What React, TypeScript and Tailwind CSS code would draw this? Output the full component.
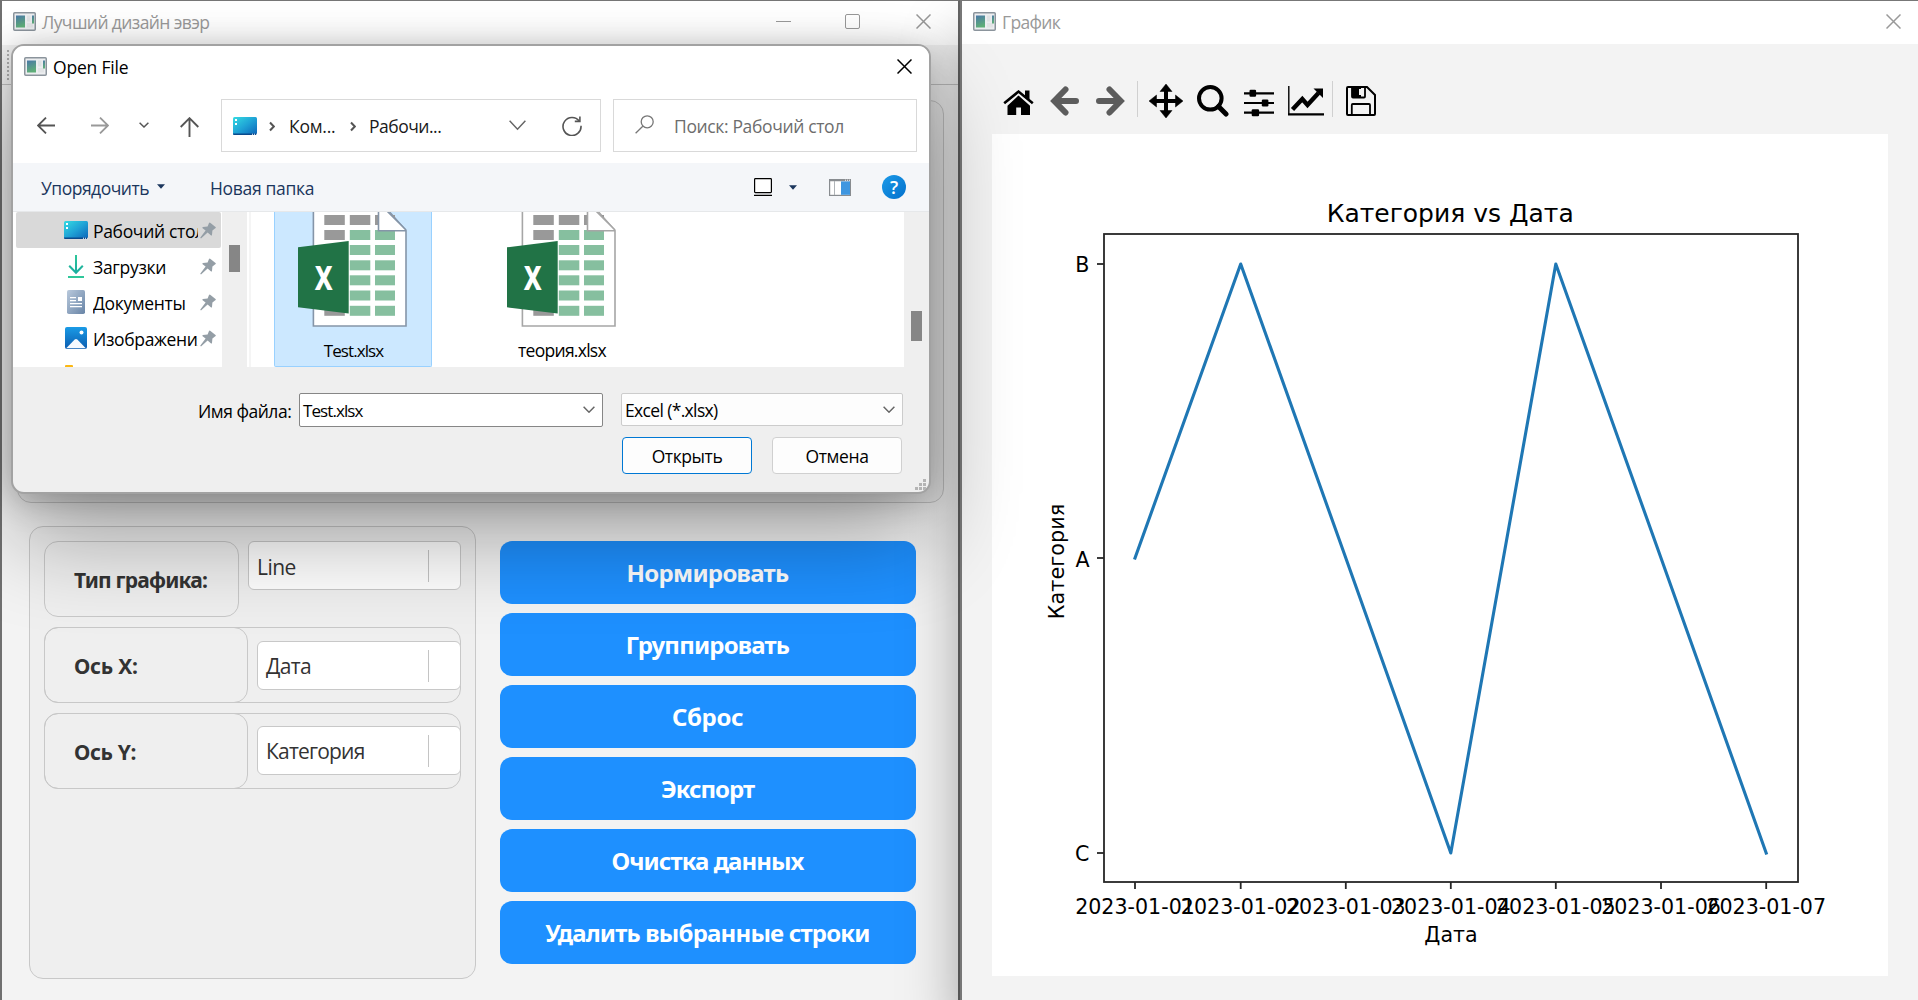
import React from 'react';

const ui = "font-['Open_Sans',sans-serif] text-[17.5px] leading-none whitespace-nowrap";

function AppIcon() {
  return (
    <svg className="block shrink-0" width="23" height="19" viewBox="0 0 23 19">
      <defs>
        <linearGradient id="appg" x1="0" y1="0" x2="0.3" y2="1">
          <stop offset="0" stopColor="#4a78a8" />
          <stop offset="1" stopColor="#5fae78" />
        </linearGradient>
      </defs>
      <rect x="0.75" y="0.75" width="21.5" height="17.5" rx="1" fill="#eceef0" stroke="#8b949c" strokeWidth="1.5" />
      <rect x="3" y="3.5" width="9" height="12" fill="url(#appg)" />
      <rect x="14" y="3.5" width="3.5" height="6" fill="#dfe2e4" />
      <rect x="14" y="11" width="6" height="4.5" fill="#e2e4e6" />
      <rect x="19" y="3.5" width="2" height="8" fill="url(#appg)" />
    </svg>
  );
}

function Cross({ color }: { color: string }) {
  return (
    <svg className="block shrink-0" width="15" height="15" viewBox="0 0 15 15">
      <path d="M0.5 0.5 L14.5 14.5 M14.5 0.5 L0.5 14.5" stroke={color} strokeWidth="1.5" fill="none" />
    </svg>
  );
}

function DesktopIcon() {
  return (
    <svg className="block shrink-0" width="24" height="18" viewBox="0 0 24 18">
      <defs>
        <linearGradient id="deskg" x1="0" y1="0" x2="1" y2="1">
          <stop offset="0" stopColor="#35dbe2" />
          <stop offset="0.5" stopColor="#1fa3d6" />
          <stop offset="1" stopColor="#0b63b8" />
        </linearGradient>
      </defs>
      <rect width="24" height="18" rx="1.5" fill="url(#deskg)" />
      <path d="M0 16.5 H24 V17 Q24 18 22.5 18 H1.5 Q0 18 0 17 Z" fill="#0a4a8c" />
      <path d="M2 2h2v2h-2z M2 6h2v2h-2z" fill="#fff" />
      <path d="M19 16.8h1v1h-1z M21 16.8h1v1h-1z M23 16.8h1v1h-1z" fill="#fff" />
    </svg>
  );
}

function Pin() {
  return (
    <svg className="block shrink-0" width="16" height="17" viewBox="0 0 16 17">
      <path
        d="M9 1 Q9.7 0.2 10.5 0.9 L15.5 5 Q16.2 5.8 15.3 6.3 L12.4 8.4 L12 12.9 Q11.7 14 10.8 13.3 L7.6 10.4 L1 16.4 L0.2 15.8 L5.6 8.6 L2.6 6.2 Q2 5.3 3 5 L7.6 4.4 Z"
        fill="#949ea6"
      />
    </svg>
  );
}

function ChevronDown({ w, color = '#666' }: { w: number; color?: string }) {
  return (
    <svg className="block shrink-0" width={w} height={w * 0.6} viewBox={`0 0 ${w} ${w * 0.6}`}>
      <path d={`M0.6 0.8 L${w / 2} ${w * 0.6 - 1} L${w - 0.6} 0.8`} stroke={color} strokeWidth="1.5" fill="none" />
    </svg>
  );
}

function Crumb() {
  return (
    <svg className="block shrink-0" width="6" height="11" viewBox="0 0 6 11">
      <path d="M1 1.5 L4.8 5.5 L1 9.5" stroke="#555" strokeWidth="2" fill="none" />
    </svg>
  );
}

function Caret() {
  return (
    <svg className="block shrink-0" width="8" height="5" viewBox="0 0 8 5">
      <path d="M0 0.3 H8 L4 4.7 Z" fill="#1b365d" />
    </svg>
  );
}

function SheetIcon({ outline }: { outline: string }) {
  const rows = [3, 18, 33, 48.3, 63.3, 78.5, 93.8];
  return (
    <svg className="block shrink-0" width="110" height="116" viewBox="0 0 110 116">
      <path d="M15.4 -4 H88 L108 18.5 V114 H15.4 Z" fill="#fff" stroke={outline} strokeWidth="1.6" />
      {rows.map((y, i) => (
        <g key={y}>
          <rect x="26.3" y={y} width="20.5" height="10" fill="#999" />
          <rect x="51.8" y={y} width="20.5" height="10" fill={i === 0 ? '#999' : '#86bf9f'} />
          <rect x="77" y={y} width="20" height="10" fill={i === 0 ? '#999' : '#86bf9f'} />
        </g>
      ))}
      <path d="M80.5 -6 V18.8 H108 L85 -6 Z" fill="#fff" />
      <path d="M80.5 -2 V18.8 H108" fill="none" stroke={outline} strokeWidth="1.6" />
      <path d="M87 -3 L108 18" fill="none" stroke={outline} strokeWidth="1.6" />
      <path d="M0 35.3 L50.7 29 V101.5 L0 95.3 Z" fill="#217346" />
      <text
        x="0"
        y="0"
        transform="translate(25.7 77.5) scale(0.76 1)"
        textAnchor="middle"
        fontFamily="Noto Sans, sans-serif"
        fontWeight="800"
        fontSize="34"
        fill="#fff"
      >
        X
      </text>
    </svg>
  );
}

function FieldRow({ label, value, track, valueTrack, comboTop }: { label: string; value: string; track: string; valueTrack: string; comboTop: string }) {
  return (
    <div className="flex h-[76px] w-[417px] rounded-[14px] border border-[#c8c8c8] bg-[#efefef]">
      <div className="-my-px -ml-px flex w-[204px] shrink-0 items-center rounded-[14px] border border-[#c8c8c8] pt-[2px] pl-[29px]">
        <span className={`font-['Noto_Sans',sans-serif] text-[21px] leading-none font-bold whitespace-nowrap text-[#333] ${track}`}>{label}</span>
      </div>
      <div className={`${comboTop} -mr-px ml-[9px] flex h-[49px] flex-1 items-center rounded-[6px] border border-[#c8c8c8] bg-white`}>
        <span className={`pt-[2px] pl-[8px] font-['Open_Sans',sans-serif] text-[21px] leading-none whitespace-nowrap text-[#333] ${valueTrack}`}>{value}</span>
        <span className="mr-[31px] ml-auto h-8 w-px bg-[#c4c4c4]" />
      </div>
    </div>
  );
}

const actions = [
  { t: 'Нормировать', c: 'tracking-[-0.7px]' },
  { t: 'Группировать', c: 'tracking-[-0.82px]' },
  { t: 'Сброс', c: 'tracking-[-0.4px]' },
  { t: 'Экспорт', c: 'tracking-[-1.02px]' },
  { t: 'Очистка данных', c: 'tracking-[-0.94px]' },
  { t: 'Удалить выбранные строки', c: 'tracking-[-0.81px]' },
];

function MainWindow() {
  return (
    <section className="flex h-full w-[960px] shrink-0 flex-col border-t border-r-2 border-l-2 border-t-[#777] border-r-[#666] border-l-[#707070] bg-[#f3f3f3]">
      <header className="flex h-11 shrink-0 bg-white">
        <div className="flex h-[41px] w-full items-center">
          <div className="-mt-[1px] ml-[11px]"><AppIcon /></div>
          <span className={`${ui} ml-[6px] pt-[2px] tracking-[-0.6px] text-[#999]`}>Лучший дизайн эвэр</span>
          <div className="mr-[27px] ml-auto flex items-center">
            <span className="mr-[54px] h-px w-[15px] bg-[#999]" />
            <span className="mr-[56px] size-[15px] rounded-[2px] border-[1.5px] border-[#999]" />
            <Cross color="#999" />
          </div>
        </div>
      </header>
      <div className="flex h-10 shrink-0 items-center border-b border-[#c2c2c2] pl-[5px]">
        <span className="h-[30px] w-0 border-l-2 border-dotted border-[#b0b0b0]" />
      </div>
      <div className="mt-[15px] ml-[15px] h-[403px] w-[927px] shrink-0 rounded-[14px] border border-[#c8c8c8] bg-[#efefef]" />
      <div className="mt-[23px] ml-[27px] flex gap-6">
        <div className="flex h-[453px] w-[447px] flex-col gap-[10px] rounded-[14px] border border-[#c8c8c8] bg-[#efefef] px-[14px] pt-[14px]">
          <div className="flex h-[76px] gap-[9px]">
            <div className="flex w-[195px] items-center rounded-[14px] border border-[#c8c8c8] pt-[2px] pl-[29px]">
              <span className="font-['Noto_Sans',sans-serif] text-[21px] leading-none font-bold tracking-[-0.8px] whitespace-nowrap text-[#333]">Тип графика:</span>
            </div>
            <div className="flex h-[49px] w-[213px] items-center rounded-[6px] border border-[#c8c8c8] bg-white">
              <span className="pt-[3px] pl-[8px] font-['Open_Sans',sans-serif] text-[21px] leading-none tracking-[-0.55px] text-[#333]">Line</span>
              <span className="mr-[31px] ml-auto h-8 w-px bg-[#c4c4c4]" />
            </div>
          </div>
          <FieldRow label="Ось X:" value="Дата" track="tracking-[-0.25px]" valueTrack="tracking-[-0.64px]" comboTop="mt-[13px]" />
          <FieldRow label="Ось Y:" value="Категория" track="tracking-[-0.35px]" valueTrack="tracking-[-0.8px]" comboTop="mt-[12px]" />
        </div>
        <div className="mt-[15px] flex w-[416px] flex-col gap-[9.5px]">
          {actions.map((a) => (
            <button key={a.t} className={`flex h-[62.5px] items-center justify-center rounded-[12px] bg-[#1e90ff] pt-[2px] pr-[1px] font-['Noto_Sans',sans-serif] text-[24px] leading-none font-bold whitespace-nowrap text-white ${a.c}`}>
              {a.t}
            </button>
          ))}
        </div>
      </div>
    </section>
  );
}

function Home() {
  return (
    <svg className="block shrink-0" width="31" height="26" viewBox="0 0 31 26">
      <path d="M15.5 5.5 L27 15.8 V25 H18 V17.5 H13.2 V25 H4.5 V15.8 Z" fill="#000" />
      <path d="M1.2 13.2 L15.5 1.6 L29.8 13.2" stroke="#000" strokeWidth="2.6" fill="none" />
      <path d="M22 0.5 H26.5 V10 L22 6.5 Z" fill="#000" />
      <path d="M3 14.6 L15.5 4.6 L28 14.6" stroke="#f2f2f2" strokeWidth="1" fill="none" />
    </svg>
  );
}

function BackArrow({ flip = false }: { flip?: boolean }) {
  return (
    <svg className={flip ? 'block shrink-0 -scale-x-100' : 'block shrink-0'} width="29" height="30" viewBox="0 0 29 30">
      <path d="M26 15 H6 M15.5 3.5 L4.3 15 L15.5 26.5" stroke="#5c5c5c" strokeWidth="6" strokeLinecap="round" strokeLinejoin="miter" fill="none" />
    </svg>
  );
}

function Toolbar() {
  return (
    <div className="flex h-[90px] shrink-0 items-center pt-[24px] pl-[41px]">
      <div className="mt-[4px]"><Home /></div>
      <div className="ml-4"><BackArrow /></div>
      <div className="ml-[17px]"><BackArrow flip /></div>
      <span className="-mt-1 ml-[12px] h-9 w-px bg-[#d0d0d0]" />
      <svg className="ml-[11px] block shrink-0" width="34" height="34" viewBox="0 0 34 34">
        <path d="M17 4 V30 M4 17 H30" stroke="#000" strokeWidth="4" />
        <path d="M17 0 L23 7.5 H11 Z M17 34 L23 26.5 H11 Z M0 17 L7.5 11 V23 Z M34 17 L26.5 11 V23 Z" fill="#000" stroke="#000" strokeWidth="0.5" />
      </svg>
      <svg className="ml-[14px] block shrink-0" width="32" height="32" viewBox="0 0 32 32">
        <circle cx="13.3" cy="13.3" r="11.3" stroke="#000" strokeWidth="4" fill="none" />
        <path d="M21.5 21.5 L29 29" stroke="#000" strokeWidth="5" strokeLinecap="round" />
      </svg>
      <svg className="mt-[3px] ml-[15px] block shrink-0" width="30" height="28" viewBox="0 0 30 28">
        <path d="M0 4.3 H30 M0 14 H30 M0 23.7 H30" stroke="#000" strokeWidth="2.2" />
        <rect x="5.5" y="0.8" width="6.6" height="7" rx="1.2" />
        <rect x="17.8" y="10.5" width="6.6" height="7" rx="1.2" />
        <rect x="7.7" y="20.2" width="7.4" height="7" rx="1.2" />
      </svg>
      <svg className="ml-[14px] block shrink-0" width="36" height="30" viewBox="0 0 36 30">
        <path d="M0.8 0 V28.5" stroke="#000" strokeWidth="1.4" />
        <path d="M0 28.4 H36" stroke="#000" strokeWidth="2.2" />
        <path d="M4.5 23.5 L14.3 13 L19.5 19 L30.5 7" stroke="#000" strokeWidth="4.4" fill="none" />
        <path d="M25.5 2.5 H35 V12 Z" />
      </svg>
      <span className="-mt-1 ml-[8px] h-9 w-px bg-[#d0d0d0]" />
      <svg className="ml-[13px] block shrink-0" width="30" height="30" viewBox="0 0 30 30">
        <path d="M2 1 H21 L29 9 V28 Q29 29 28 29 H2 Q1 29 1 28 V2 Q1 1 2 1 Z" stroke="#000" strokeWidth="2" fill="none" />
        <path d="M6 1 V10.5 Q6 11.5 7 11.5 H18 Q19 11.5 19 10.5 V1" stroke="#000" strokeWidth="1.8" fill="none" />
        <path d="M6 1 H15 V3 H13 V9 H15 V11 H6 Z" />
        <path d="M5.8 29 V19 Q5.8 18 6.8 18 H23 Q24 18 24 19 V29" stroke="#000" strokeWidth="1.8" fill="none" />
      </svg>
    </div>
  );
}

const xs = [143, 248.7, 353.8, 458.8, 563.8, 669, 774.2];
const ys = [424, 130, 424, 719, 130, 424, 719];
const yTicks = [
  { t: 'B', y: 130, b: 138 },
  { t: 'A', y: 424, b: 433 },
  { t: 'C', y: 719, b: 727 },
];

function Plot() {
  const pts = xs.map((x, i) => `${x},${ys[i]}`).join(' ');
  return (
    <svg className="block bg-white" width="896" height="842" viewBox="0 0 896 842" fontFamily="DejaVu Sans, sans-serif" fontSize="20.6" fill="#000">
      <text x="458.2" y="87.9" fontSize="25" textAnchor="middle">Категория vs Дата</text>
      <rect x="112" y="100" width="694" height="648" fill="none" stroke="#262626" strokeWidth="1.8" />
      {xs.map((x, i) => (
        <g key={x}>
          <path d={`M${x} 748 V755`} stroke="#262626" strokeWidth="1.8" />
          <text x={x} y="780" textAnchor="middle">{`2023-01-0${i + 1}`}</text>
        </g>
      ))}
      {yTicks.map((k) => (
        <g key={k.t}>
          <path d={`M105 ${k.y} H112`} stroke="#262626" strokeWidth="1.8" />
          <text x="97.5" y={k.b} textAnchor="end">{k.t}</text>
        </g>
      ))}
      <polyline points={pts} fill="none" stroke="#1f77b4" strokeWidth="3.1" strokeLinejoin="round" strokeLinecap="square" />
      <text x="459" y="807.7" textAnchor="middle">Дата</text>
      <text transform="translate(71.7 427.5) rotate(-90)" fontSize="20.8" textAnchor="middle">Категория</text>
    </svg>
  );
}

function ChartWindow() {
  return (
    <section className="flex h-full w-[958px] shrink-0 flex-col border-t border-l-2 border-t-[#777] border-l-[#777] bg-[#f3f3f3] shadow-[0_36px_54px_rgba(0,0,0,0.34)]">
      <header className="flex h-[43px] shrink-0 bg-white">
        <div className="flex h-[41px] w-full items-center">
          <div className="-mt-[1px] ml-[11px]"><AppIcon /></div>
          <span className={`${ui} ml-[6px] pt-[2px] tracking-[-0.7px] text-[#999]`}>График</span>
          <div className="mr-[17px] ml-auto"><Cross color="#999" /></div>
        </div>
      </header>
      <Toolbar />
      <div className="ml-[30px]"><Plot /></div>
    </section>
  );
}

const sideRow = 'flex h-9 shrink-0 items-center';
const sideLabel = "w-[105px] overflow-hidden pt-[2px] font-['Open_Sans',sans-serif] text-[17.5px] leading-[26px] whitespace-nowrap text-black";

function Sidebar() {
  return (
    <div className="flex w-[209px] shrink-0 flex-col overflow-hidden bg-white pl-[3px]">
      <div className={`${sideRow} mr-px rounded-[2px] bg-[#d9d9d9] pl-[48px]`}>
        <DesktopIcon />
        <span className={`${sideLabel} ml-[5px] tracking-[-0.33px]`}>Рабочий стол</span>
        <div className="ml-[2px]"><Pin /></div>
      </div>
      <div className={`${sideRow} pl-[52px]`}>
        <svg className="block shrink-0" width="16" height="23" viewBox="0 0 16 23">
          <defs>
            <linearGradient id="dlg" gradientUnits="userSpaceOnUse" x1="0" y1="0" x2="0" y2="23">
              <stop offset="0" stopColor="#2fc79a" />
              <stop offset="1" stopColor="#13a5a0" />
            </linearGradient>
          </defs>
          <path d="M8 0 V18 M1.2 10.8 L8 17.8 L14.8 10.8" stroke="url(#dlg)" strokeWidth="2" fill="none" />
          <path d="M0 22 H16" stroke="#2fc79a" strokeWidth="2" />
        </svg>
        <span className={`${sideLabel} ml-[9px] tracking-[-0.31px]`}>Загрузки</span>
        <div className="ml-[2px]"><Pin /></div>
      </div>
      <div className={`${sideRow} pl-[51px]`}>
        <svg className="block shrink-0" width="18" height="24" viewBox="0 0 18 24">
          <defs>
            <linearGradient id="docg" x1="0" y1="0" x2="1" y2="1">
              <stop offset="0" stopColor="#b9c9dc" />
              <stop offset="1" stopColor="#6884a6" />
            </linearGradient>
          </defs>
          <rect width="18" height="24" rx="1.8" fill="url(#docg)" />
          <path d="M3 7.7 H9 M3 10.7 H9 M3 13.7 H15 M3 16.7 H15" stroke="#fff" strokeWidth="1.3" />
          <rect x="11" y="7" width="4" height="4" fill="#fff" />
        </svg>
        <span className={`${sideLabel} ml-[8px] tracking-[-0.36px]`}>Документы</span>
        <div className="ml-[2px]"><Pin /></div>
      </div>
      <div className={`${sideRow} pl-[49px]`}>
        <svg className="block shrink-0" width="22" height="22" viewBox="0 0 22 22">
          <defs>
            <linearGradient id="picg" x1="0" y1="0" x2="0" y2="1">
              <stop offset="0" stopColor="#1a9be6" />
              <stop offset="1" stopColor="#0b5cb0" />
            </linearGradient>
          </defs>
          <rect width="22" height="22" rx="2" fill="url(#picg)" />
          <path d="M1.2 21.2 L9.7 12.6 Q11 11.4 12.3 12.6 L20.8 21.2 Z" fill="#f4f9ff" />
          <circle cx="16.5" cy="5.5" r="2" fill="#fff" />
        </svg>
        <span className={`${sideLabel} ml-[6px] tracking-[-0.34px]`}>Изображения</span>
        <div className="ml-[2px]"><Pin /></div>
      </div>
      <div className="mt-[9px] ml-[49px] h-3 w-[8px] shrink-0 rounded-t-[1px] bg-[#fcb814]" />
    </div>
  );
}

function OpenDialog() {
  return (
    <div className="absolute top-[44px] left-[11px] flex h-[450px] w-[920px] flex-col overflow-hidden rounded-[13px] border-2 border-[#a2a2a2] bg-[#efefef] shadow-[0_48px_92px_-4px_rgba(0,0,0,0.33),0_4px_34px_rgba(0,0,0,0.25)]">
      <div className="flex h-[53px] shrink-0 bg-white">
        <div className="flex h-[41px] w-full items-center">
          <div className="-mt-[1px] ml-[11px]"><AppIcon /></div>
          <span className={`${ui} ml-[6px] pt-[3px] tracking-[-0.19px] text-black`}>Open File</span>
          <div className="mr-[17px] ml-auto"><Cross color="#000" /></div>
        </div>
      </div>
      <div className="flex h-[64px] shrink-0 items-start bg-white">
        <div className="flex h-[53px] items-center">
          <svg className="ml-[24px] block" width="18" height="17" viewBox="0 0 18 17">
            <path d="M18 8.5 H1 M9 0.6 L1 8.5 L9 16.4" stroke="#555" strokeWidth="1.8" fill="none" />
          </svg>
          <svg className="ml-[36px] block" width="18" height="17" viewBox="0 0 18 17">
            <path d="M0 8.5 H17 M9 0.6 L17 8.5 L9 16.4" stroke="#999" strokeWidth="1.8" fill="none" />
          </svg>
          <div className="-mt-[2px] ml-[30px]"><ChevronDown w={10} color="#555" /></div>
          <svg className="mt-[2px] ml-[31px] block" width="19" height="20" viewBox="0 0 19 20">
            <path d="M9.5 20 V1.2 M0.7 10 L9.5 1.2 L18.3 10" stroke="#555" strokeWidth="1.9" fill="none" />
          </svg>
        </div>
        <div className="ml-[22px] flex h-[53px] w-[380px] items-center border border-[#d9d9d9]">
          <div className="ml-[11px]"><DesktopIcon /></div>
          <div className="mt-[1px] ml-[12px]"><Crumb /></div>
          <span className={`${ui} ml-[14px] w-[50px] pt-[2px] tracking-[-0.24px] text-[#1a1a1a]`}>Ком...</span>
          <div className="mt-[1px] ml-[11px]"><Crumb /></div>
          <span className={`${ui} ml-[13px] pt-[2px] tracking-[-0.5px] text-[#1a1a1a]`}>Рабочи...</span>
          <div className="ml-auto"><ChevronDown w={17} /></div>
          <svg className="mr-[18px] ml-[36px] block" width="20" height="20" viewBox="0 0 20 20">
            <path d="M17.3 5.2 A9 9 0 1 0 19 9.8" stroke="#555" strokeWidth="1.6" fill="none" />
            <path d="M17.9 0.5 V5.4 H12.8" stroke="#555" strokeWidth="1.6" fill="none" />
          </svg>
        </div>
        <div className="ml-[12px] flex h-[53px] w-[304px] items-center border border-[#d9d9d9]">
          <svg className="-mt-[2px] ml-[21px] block" width="19" height="19" viewBox="0 0 19 19">
            <circle cx="12.2" cy="6.8" r="6" stroke="#777" strokeWidth="1.3" fill="none" />
            <path d="M7.8 11.2 L0.6 18.2" stroke="#777" strokeWidth="1.3" />
          </svg>
          <span className={`${ui} ml-[20px] pt-[3px] tracking-[-0.36px] text-[#6d6d6d]`}>Поиск: Рабочий стол</span>
        </div>
      </div>
      <div className="flex h-[49px] shrink-0 items-center border-b border-[#e6e8ea] bg-[#f4f6f9]">
        <span className={`${ui} ml-[28px] pt-[3px] tracking-[-0.5px] text-[#1b365d]`}>Упорядочить</span>
        <div className="-mt-[2px] ml-[8px]"><Caret /></div>
        <span className={`${ui} ml-[45px] pt-[3px] tracking-[-0.32px] text-[#1b365d]`}>Новая папка</span>
        <div className="mr-[23px] ml-auto flex items-center">
          <svg className="block" width="18" height="18" viewBox="0 0 18 18">
            <rect x="0.6" y="0.6" width="16.8" height="14" rx="0.8" fill="#fff" stroke="#000" strokeWidth="1.2" />
            <path d="M0 17.3 H18" stroke="#000" strokeWidth="1.2" />
          </svg>
          <div className="ml-[17px]"><Caret /></div>
          <svg className="ml-[32px] block" width="22" height="17" viewBox="0 0 22 17">
            <rect x="0.6" y="0.6" width="20.8" height="15.8" fill="#fff" stroke="#888c90" strokeWidth="1.2" />
            <path d="M0 1.2 H22" stroke="#888c90" strokeWidth="2.2" />
            <path d="M5.5 2 V16" stroke="#b0b4b8" />
            <rect x="12" y="2.4" width="9" height="13.4" fill="#3e96e0" />
            <path d="M16 1.2 H21" stroke="#fff" strokeDasharray="1 1" />
          </svg>
          <span className="ml-[31px] flex size-6 items-center justify-center rounded-full bg-gradient-to-br from-[#1b9ae8] to-[#0470cc] font-['Open_Sans',sans-serif] text-[18px] leading-none font-semibold text-white">?</span>
        </div>
      </div>
      <div className="flex h-[155px] shrink-0 overflow-hidden">
        <Sidebar />
        <div className="w-[25px] shrink-0 pt-[33px] pl-[7px]">
          <div className="h-[27px] w-[11px] bg-[#868686]" />
        </div>
        <div className="w-[4px] shrink-0 border-l-2 border-white bg-[#f5f5f5]" />
        <div className="flex flex-1 overflow-hidden bg-white pl-[23px]">
          <div className="flex w-[158px] flex-col items-center rounded-b-[2px] border-x border-b border-[#99d1ff] bg-[#cce8ff]">
            <SheetIcon outline="#8595a8" />
            <span className={`${ui} mt-[14px] ml-[1px] text-[17px]! tracking-[-0.91px] text-black`}>Test.xlsx</span>
          </div>
          <div className="ml-[51px] flex w-[158px] flex-col items-center">
            <SheetIcon outline="#a6a6a6" />
            <span className={`${ui} mt-[14px] tracking-[-0.73px] text-black`}>теория.xlsx</span>
          </div>
        </div>
        <div className="w-[25px] shrink-0 pt-[99px] pl-[7px]">
          <div className="h-[30px] w-[11px] bg-[#868686]" />
        </div>
      </div>
      <div className="mt-[26px] flex shrink-0 items-start">
        <span className={`${ui} ml-[185px] w-[101px] pt-[10px] tracking-[-0.48px] text-black`}>Имя файла:</span>
        <div className="flex h-[34px] w-[304px] items-center rounded-[2px] border border-[#868686] bg-white">
          <span className={`${ui} mt-[1px] ml-[3px] text-[17px]! tracking-[-0.91px] text-black`}>Test.xlsx</span>
          <div className="-mt-px mr-[7px] ml-auto"><ChevronDown w={12} /></div>
        </div>
        <div className="ml-[18px] flex h-[33px] w-[282px] items-center rounded-[2px] border border-[#cccccc] bg-[#fdfdfd]">
          <span className={`${ui} ml-[3px] pt-[3px] tracking-[-0.65px] text-black`}>Excel (*.xlsx)</span>
          <div className="mr-[7px] ml-auto"><ChevronDown w={12} /></div>
        </div>
      </div>
      <div className="mt-[10px] flex shrink-0">
        <button className={`${ui} ml-[609px] h-[37px] w-[130px] rounded-[4px] border border-[#0078d4] bg-[#fdfdfd] pt-[2px] tracking-[-0.42px] text-black`}>Открыть</button>
        <button className={`${ui} ml-[20px] h-[37px] w-[130px] rounded-[4px] border border-[#d0d0d0] bg-[#fdfdfd] pt-[2px] tracking-[-0.38px] text-black`}>Отмена</button>
      </div>
      <svg className="mt-[5px] mr-[3px] ml-auto block shrink-0" width="11" height="11" viewBox="0 0 11 11">
        <path d="M8 0h3v3h-3z M4 4h3v3h-3z M8 4h3v3h-3z M0 8h3v3h-3z M4 8h3v3h-3z M8 8h3v3h-3z" fill="#b4b4b4" />
      </svg>
    </div>
  );
}

export default function App() {
  return (
    <main className="relative flex h-[1000px] w-[1918px] overflow-hidden bg-[#f2f2f2]">
      <MainWindow />
      <ChartWindow />
      <OpenDialog />
    </main>
  );
}
